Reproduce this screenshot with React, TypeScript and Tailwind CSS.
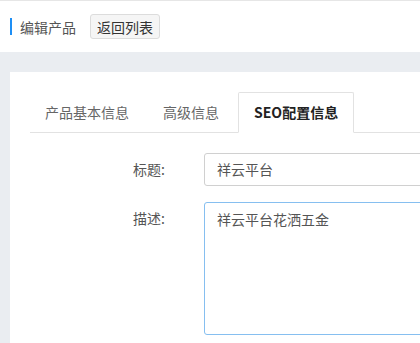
import React from 'react';

const tabs = ['产品基本信息', '高级信息', 'SEO配置信息'];

export default function App() {
  const active = 2;

  return (
    <div
      className="w-[420px] h-[343px] overflow-hidden bg-[#eaedf1]"
      style={{ fontFamily: '"Noto Sans CJK SC", "Noto Sans", sans-serif' }}
    >
      {/* page header */}
      <div className="h-[52px] bg-white border-t border-[#e6e6e6] flex items-center pl-[10px]">
        <div className="w-[2px] h-[17px] bg-[#1e8ff5]" />
        <span className="ml-[8px] text-[14px] text-[#555] leading-none">编辑产品</span>
        <button className="ml-[14px] h-[25px] px-[6px] text-[14px] leading-none text-[#333] bg-[#f5f5f5] border border-[#dcdcdc] rounded-[3px]">
          返回列表
        </button>
      </div>

      {/* card */}
      <div className="mt-[20px] ml-[10px] h-[300px] bg-white pt-[20px]">
        <div className="ml-[20px] flex items-end border-b border-[#e2e2e2] h-[41px]">
          {tabs.map((t, i) => (
            <div
              key={t}
              className={
                i === active
                  ? 'h-[41px] -mb-px px-[15px] mr-[4px] flex items-center text-[14px] font-semibold text-[#222] bg-white border border-[#e2e2e2] border-b-white rounded-t-[2px]'
                  : 'h-[40px] px-[15px] mr-[4px] flex items-center text-[14px] text-[#666]'
              }
            >
              {t}
            </div>
          ))}
        </div>

        <div className="pt-[20px] flex flex-col gap-[16px]">
          <div className="flex items-center">
            <label className="w-[155px] shrink-0 text-right text-[14px] text-[#555]">标题:</label>
            <div className="ml-[39px] w-[400px] h-[33px] border border-[#d0d0d0] rounded-[3px] flex items-center pl-[12px] text-[14px] text-[#555] shrink-0">
              祥云平台
            </div>
          </div>
          <div className="flex items-start">
            <label className="w-[155px] shrink-0 text-right text-[14px] text-[#555] pt-[6px]">描述:</label>
            <div className="ml-[39px] w-[400px] h-[133px] border border-[#86bff0] rounded-[3px] pl-[12px] pt-[6px] text-[14px] text-[#555] shrink-0">
              祥云平台花洒五金
            </div>
          </div>
        </div>
      </div>
    </div>
  );
}
